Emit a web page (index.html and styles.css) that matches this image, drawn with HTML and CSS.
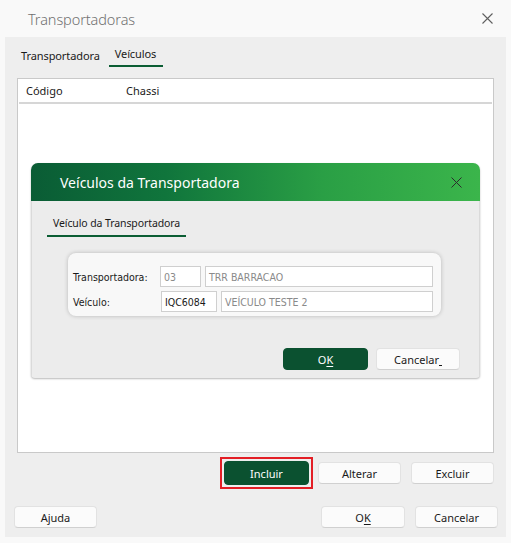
FILE: index.html
```html
<!DOCTYPE html>
<html lang="pt">
<head>
<meta charset="utf-8">
<title>Transportadoras</title>
<link rel="stylesheet" href="styles.css">
</head>
<body>
<div class="window">
  <div class="titlebar">
    <span class="title">Transportadoras</span>
    <svg class="close" width="11" height="11" viewBox="0 0 11 11"><path d="M0.5 0.5 L10.5 10.5 M10.5 0.5 L0.5 10.5" stroke="#5f5f5f" stroke-width="1.1" fill="none"/></svg>
  </div>
  <div class="content">
    <div class="tabs">
      <span class="tab">Transportadora</span>
      <span class="tab active">Veículos</span>
    </div>
    <div class="list">
      <div class="list-head">
        <span class="col-code">Código</span>
        <span class="col-chassi">Chassi</span>
      </div>
    </div>
    <div class="actions">
      <span class="focus-ring"><button class="btn primary wide">Incluir</button></span>
      <button class="btn">Alterar</button>
      <button class="btn">Excluir</button>
    </div>
    <div class="footer">
      <button class="btn">Ajuda</button>
      <div class="footer-right">
        <button class="btn ok">O<u>K</u></button>
        <button class="btn">Cancelar</button>
      </div>
    </div>
  </div>

  <div class="dialog">
    <div class="dialog-head">
      <span class="dialog-title">Veículos da Transportadora</span>
      <svg class="dialog-close" width="11" height="11" viewBox="0 0 11 11"><path d="M0.5 0.5 L10.5 10.5 M10.5 0.5 L0.5 10.5" stroke="#2b2b2b" stroke-width="1" fill="none"/></svg>
    </div>
    <div class="dialog-body">
      <div class="dtabs"><span class="dtab">Veículo da Transportadora</span></div>
      <div class="panel">
        <div class="row">
          <span class="label">Transportadora:</span>
          <span class="field f-code disabled">03</span>
          <span class="field f-name disabled">TRR BARRACAO</span>
        </div>
        <div class="row">
          <span class="label">Veículo:</span>
          <span class="field f-code2">IQC6084</span>
          <span class="field f-name2 disabled">VEÍCULO TESTE 2</span>
        </div>
      </div>
      <div class="dialog-actions">
        <button class="btn primary dbtn">O<u>K</u></button>
        <button class="btn dbtn2">Cancelar<span class="ak"></span></button>
      </div>
    </div>
  </div>
</div>
</body>
</html>
```

FILE: styles.css
```css
* { box-sizing: border-box; }
html, body { margin: 0; padding: 0; }
body {
  width: 511px;
  height: 543px;
  background: #f9f9f9;
  font-family: "Noto Sans", "Open Sans", sans-serif;
  color: #1a1a1a;
  overflow: hidden;
}
.window { position: relative; width: 511px; height: 543px; }

.titlebar {
  height: 37px;
  display: flex;
  align-items: center;
  padding: 0 18px 0 28px;
  justify-content: space-between;
}
.title {
  font-size: 14.5px;
  color: #707070;
  font-weight: 300;
  letter-spacing: -0.1px;
}

.content {
  margin: 0 5px;
  height: 500px;
  background: #eeeeee;
  padding: 9px 12px 0 12px;
  display: flex;
  flex-direction: column;
}

.tabs {
  display: flex;
  gap: 9px;
  padding-left: 4px;
  height: 23px;
  margin-bottom: 9px;
}
.tab {
  font-size: 11px;
  padding: 2px 0 0 0;
  height: 21px;
  color: #1a1a1a;
  letter-spacing: -0.1px;
}
.tab.active {
  padding: 0 7px 0 6px;
  border-bottom: 2px solid #0b5d33;
  height: 21px;
}

.list {
  height: 375px;
  background: #ffffff;
  border: 1px solid #c9c9c9;
}
.list-head {
  height: 25px;
  margin: 0 1px;
  border-bottom: 2px solid #d6d6d6;
  display: flex;
  align-items: center;
  font-size: 11px;
  padding-left: 7px;
}
.col-code { width: 100px; }

.btn {
  font-family: "Noto Sans", "Open Sans", sans-serif;
  font-size: 11px;
  color: #1a1a1a;
  width: 83px;
  height: 22px;
  border: 1px solid #e2e2e2;
  border-bottom-color: #d0d0d0;
  border-radius: 4px;
  background: #fbfbfb;
  padding: 0;
  margin: 0;
  display: block;
}
.btn u { text-underline-offset: 2px; }
.btn.primary {
  background: #0b5130;
  border-color: #0b5130;
  color: #ffffff;
}
.btn.wide {
  width: 85px;
  height: 24px;
}
.focus-ring {
  display: block;
  border: 2px solid #e31e25;
  padding: 2px;
  margin-right: -5px;
}

.actions {
  display: flex;
  justify-content: flex-end;
  align-items: center;
  gap: 10px;
  margin-top: 4px;
  height: 32px;
}

.footer {
  display: flex;
  justify-content: space-between;
  margin-top: 17px;
  margin-left: -3px;
  margin-right: -4px;
}
.footer-right { display: flex; gap: 10px; }
.btn.ok { width: 84px; }

/* dialog overlay */
.dialog {
  position: absolute;
  left: 31px;
  top: 163px;
  width: 449px;
  height: 215px;
  border-radius: 7px 7px 4px 4px;
  box-shadow: 0 1px 2px rgba(0,0,0,0.28);
  background: #ececec;
  display: flex;
  flex-direction: column;
  overflow: hidden;
}
.dialog-head {
  height: 38px;
  background: linear-gradient(90deg, #0a5c35 0%, #10753c 30%, #2a9f45 65%, #3bb54b 100%);
  display: flex;
  align-items: center;
  justify-content: space-between;
  padding: 0 18px 0 29px;
}
.dialog-title {
  color: #ffffff;
  font-size: 14px;
}
.dialog-body {
  flex: 1;
  border-left: 1px solid #dadada;
  border-right: 1px solid #dadada;
  padding: 9px 0 0 15px;
  display: flex;
  flex-direction: column;
}
.dtabs { height: 21px; }
.dtab {
  display: inline-block;
  font-size: 10.5px;
  padding: 0 6px;
  height: 21px;
  border-bottom: 2px solid #0b5d33;
  letter-spacing: -0.1px;
}
.panel {
  margin: 22px 0 0 21px;
  width: 373px;
  height: 63px;
  background: #f8f8f8;
  border-radius: 8px;
  box-shadow: 0 0 4px rgba(0,0,0,0.22);
  padding: 13px 0 0 5px;
  font-family: "DejaVu Sans Condensed", "DejaVu Sans", sans-serif;
  font-stretch: condensed;
  font-size: 10.5px;
}
.row { display: flex; align-items: center; height: 21px; margin-bottom: 4px; }
.label { width: 87px; color: #1a1a1a; }
.field {
  height: 21px;
  border: 1px solid #cfcfcf;
  background: #ffffff;
  display: flex;
  align-items: center;
  padding-left: 3px;
  margin-right: 4px;
  color: #1a1a1a;
}
.field.disabled { color: #8a8a8a; }
.f-code { width: 41px; }
.f-name { width: 228px; }
.f-code2 { width: 56px; margin-left: 1px; }
.f-name2 { width: 212px; }

.dialog-actions {
  display: flex;
  justify-content: flex-end;
  gap: 8px;
  padding-right: 19px;
  margin-top: 32px;
}
.dbtn { width: 85px; height: 22px; }
.dbtn2 { width: 84px; height: 22px; }
.ak {
  display: inline-block;
  width: 3px;
  height: 1px;
  border-bottom: 1px solid #1a1a1a;
  vertical-align: -2px;
}
```
